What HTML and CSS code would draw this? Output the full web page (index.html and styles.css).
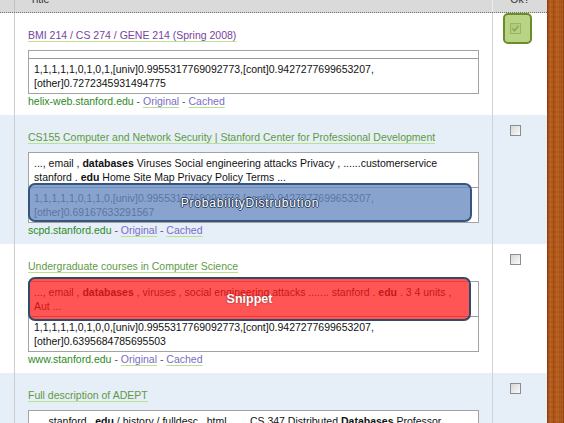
FILE: index.html
```html
<!DOCTYPE html>
<html>
<head>
<meta charset="utf-8">
<link rel="stylesheet" href="styles.css">
</head>
<body>
<div class="screen">
  <div class="table">
    <div class="head">
      <div class="c-left"></div>
      <div class="c-main">Title</div>
      <div class="c-ok">Ok?</div>
    </div>

    <div class="row">
      <div class="c-left"></div>
      <div class="c-main">
        <div class="title"><a class="visited">BMI 214 / CS 274 / GENE 214 (Spring 2008)</a></div>
        <div class="box">
          <div class="snip empty"></div>
          <div class="nums">1,1,1,1,1,0,1,0,1,[univ]0.9955317769092773,[cont]0.9427277699653207,<br>[other]0.7272345931494775</div>
        </div>
        <div class="url"><span class="host">helix-web.stanford.edu</span> - <a>Original</a> - <a>Cached</a></div>
      </div>
      <div class="c-ok">
        <span class="cb"><svg class="tick" width="9" height="9" viewBox="0 0 9 9"><path d="M1.5 4.5 L3.5 6.8 L7.6 1.8" fill="none" stroke="#5a5a5a" stroke-width="1.4"/></svg><span class="ov-green"></span></span>
      </div>
    </div>

    <div class="row alt">
      <div class="c-left"></div>
      <div class="c-main">
        <div class="title"><a>CS155 Computer and Network Security | Stanford Center for Professional Development</a></div>
        <div class="box">
          <div class="snip">..., email , <b>databases</b> Viruses Social engineering attacks Privacy , ......customerservice<br>stanford . <b>edu</b> Home Site Map Privacy Policy Terms ...</div>
          <div class="nums">1,1,1,1,1,0,1,1,0,[univ]0.9955317769092773,[cont]0.9427277699653207,<br>[other]0.69167633291567</div>
          <div class="ov-blue"><span class="lbl-blue">ProbabilityDistrubution</span></div>
        </div>
        <div class="url"><span class="host">scpd.stanford.edu</span> - <a>Original</a> - <a>Cached</a></div>
      </div>
      <div class="c-ok"><span class="cb"></span></div>
    </div>

    <div class="row">
      <div class="c-left"></div>
      <div class="c-main">
        <div class="title"><a>Undergraduate courses in Computer Science</a></div>
        <div class="box">
          <div class="snip">..., email , <b>databases</b> , viruses , social engineering attacks ....... stanford . <b>edu</b> . 3 4 units ,<br>Aut ...</div>
          <div class="nums">1,1,1,1,1,0,1,0,0,[univ]0.9955317769092773,[cont]0.9427277699653207,<br>[other]0.6395684785695503</div>
          <div class="ov-red"><span class="lbl-red">Snippet</span></div>
        </div>
        <div class="url"><span class="host">www.stanford.edu</span> - <a>Original</a> - <a>Cached</a></div>
      </div>
      <div class="c-ok"><span class="cb"></span></div>
    </div>

    <div class="row alt">
      <div class="c-left"></div>
      <div class="c-main">
        <div class="title"><a>Full description of ADEPT</a></div>
        <div class="box">
          <div class="snip">..., stanford . <b>edu</b> / history / fulldesc . html ...... CS 347 Distributed <b>Databases</b> Professor<br>...</div>
          <div class="nums">&nbsp;<br>&nbsp;</div>
        </div>
      </div>
      <div class="c-ok"><span class="cb"></span></div>
    </div>
  </div>
  <div class="wood"></div>
</div>
</body>
</html>
```

FILE: styles.css
```css
* { box-sizing: border-box; }
html, body {
  margin: 0;
  padding: 0;
  background: #fff;
  overflow: hidden;
}
body {
  width: 564px;
  height: 423px;
  font-family: "Liberation Sans", Arial, sans-serif;
  font-size: 10.5px;
  line-height: 14px;
  color: #111;
}
.screen {
  display: flex;
  height: 423px;
  overflow: hidden;
}
.table {
  width: 547px;
  flex: none;
  margin-top: -11px;
}
.wood {
  flex: 1;
  background-color: #ad5416;
  background-image:
    repeating-linear-gradient(90deg, rgba(60,20,0,0.12) 0 1px, transparent 1px 3px, rgba(255,190,110,0.10) 3px 4px, transparent 4px 6px),
    repeating-linear-gradient(0deg, rgba(0,0,0,0.05) 0 2px, transparent 2px 5px),
    linear-gradient(90deg, #97430f 0, #b85d1d 3px, #ae5518 8px, #bd6322 12px, #9c4711 17px);
}
.head, .row {
  display: grid;
  grid-template-columns: 14px 479px 54px;
}
.head {
  height: 24px;
  background: #dadada;
  border-bottom: 1px dotted #6f6f6f;
  color: #333;
}
.head .c-main {
  border-left: 1px solid #c2c2c2;
  border-right: 1px solid #ececec;
  padding: 0 0 6px 15px;
  display: flex;
  align-items: flex-end;
}
.head .c-ok {
  display: flex;
  align-items: flex-end;
  justify-content: center;
  padding-bottom: 6px;
}
.row.alt { background: #e6eef8; }
.row .c-main {
  border-left: 1px solid #cdcdcd;
  border-right: 1px solid #d2d2d2;
  padding: 15px 13px 7px;
}
.title {
  height: 14px;
  margin-bottom: 8px;
  white-space: nowrap;
}
.title a {
  color: #5e9a42;
  text-decoration: underline;
  text-decoration-color: #b8e28c;
  text-underline-offset: 2px;
}
.title a.visited { color: #7b42a2; }
.box {
  position: relative;
  background: #fff;
  border: 1px solid #a3a3a3;
}
.snip {
  padding: 3px 5px;
  border-bottom: 1px solid #9a9a9a;
  white-space: nowrap;
  overflow: hidden;
}
.snip.empty { height: 8px; padding: 0; }
.nums {
  padding: 3px 5px;
  white-space: nowrap;
}
.url {
  height: 14px;
  white-space: nowrap;
  color: #555;
}
.url .host { color: #2c8a1e; }
.url a {
  color: #7a6cc8;
  text-decoration: underline;
  text-decoration-color: #b8e28c;
  text-underline-offset: 2px;
}
.cb {
  position: relative;
  display: block;
  width: 11px;
  height: 11px;
  margin: 10px 0 0 17px;
  border: 1px solid #8d8d8d;
  background: linear-gradient(135deg, #d6d6d6, #fbfbfb);
}
.tick { position: absolute; left: 0; top: 0; }
.ov-green {
  position: absolute;
  left: -8px;
  top: -11px;
  width: 29px;
  height: 31px;
  border: 2px solid #6a8d2b;
  border-radius: 5px;
  background: rgba(159,196,88,0.72);
}
.ov-blue {
  position: absolute;
  left: -1px;
  top: 30px;
  width: 444px;
  height: 39px;
  border: 2px solid #35557f;
  border-radius: 7px;
  background: rgba(106,140,194,0.8);
  display: flex;
  align-items: center;
  justify-content: center;
}
.lbl-blue {
  font-size: 12px;
  letter-spacing: 0.8px;
  color: #fff;
  text-shadow: 1px 0 0 #2a3f60, -1px 0 0 #2a3f60, 0 1px 0 #2a3f60, 0 -1px 0 #2a3f60;
}
.ov-red {
  position: absolute;
  left: -1px;
  top: -5px;
  width: 443px;
  height: 44px;
  border: 2px solid #2f4a6c;
  border-radius: 7px;
  background: rgba(255,27,27,0.745);
  display: flex;
  align-items: center;
  justify-content: center;
}
.lbl-red {
  font-size: 12.5px;
  font-weight: bold;
  color: #fff;
  text-shadow: 0 0 2px rgba(90,0,0,0.7);
}
```
